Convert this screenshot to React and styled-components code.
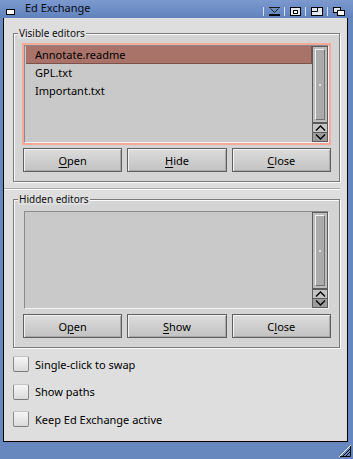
import React from 'react';
import styled, { createGlobalStyle } from 'styled-components';

const Global = createGlobalStyle`
  html, body { margin: 0; padding: 0; background: #6787bf; }
  body { font-family: "Noto Sans", "DejaVu Sans", sans-serif; }
  * { box-sizing: border-box; }
`;

const Window = styled.div`
  width: 353px;
  height: 459px;
  display: flex;
  flex-direction: column;
  background: #6787bf;
  overflow: hidden;
`;

const TitleBar = styled.div`
  height: 18px;
  flex: none;
  display: flex;
  align-items: flex-start;
  background: linear-gradient(#7b99cf, #6083bd);
  padding-left: 6px;
`;

const CloseGadget = styled.span`
  width: 9px;
  height: 6px;
  margin-top: 9px;
  border: 1px solid #000;
  background: #fff;
  flex: none;
`;

const Title = styled.span`
  margin-left: 10px;
  font-size: 11px;
  line-height: 15px;
  color: #0a0a14;
  white-space: nowrap;
`;

const Spacer = styled.span`
  flex: 1;
`;

const Gadgets = styled.div`
  display: flex;
  margin-top: 7px;
  margin-right: 4px;
`;

const Gadget = styled.span`
  display: flex;
  align-items: flex-end;
  height: 9px;
  border-left: 1px solid #d6e0f2;
  padding-left: 5px;
  padding-right: 4px;
`;

const Middle = styled.div`
  flex: 1;
  display: flex;
  padding: 0 5px 0 3px;
  min-height: 0;
`;

const Content = styled.div`
  flex: 1;
  display: flex;
  flex-direction: column;
  background: #dedede;
  border-left: 1px solid #000;
  border-right: 1px solid #000;
  border-bottom: 1px solid #000;
  padding: 10px 7px 0 9px;
`;

const Group = styled.fieldset`
  margin: 0;
  min-width: 0;
  padding: 4px 8px 9px 8px;
  border: 1px solid #7c7c7c;
  box-shadow: 1px 1px 0 #fafafa, inset 1px 1px 0 #fafafa;
  background: #d4d4d4;
  display: flex;
  flex-direction: column;
`;

const Legend = styled.legend`
  font-size: 10px;
  line-height: 11px;
  color: #111;
  padding: 0 1px;
  margin-left: -4px;
  background: #dedede;
`;

const ListBox = styled.div`
  height: 102px;
  border: 2px solid ${p => (p.$focused ? '#f6a998' : 'transparent')};
  display: flex;
`;

const ListInner = styled.div`
  flex: 1;
  display: flex;
  background: #c9c9c9;
  border: 1px solid;
  border-color: #8a8a8a #f2f2f2 #f2f2f2 #8a8a8a;
  padding-left: 1px;
`;

const Rows = styled.div`
  flex: 1;
  display: flex;
  flex-direction: column;
`;

const Row = styled.div`
  height: 18px;
  padding-left: 9px;
  font-size: 11px;
  color: #000;
  background: ${p => (p.$selected ? '#a9736a' : 'transparent')};
  border-bottom: 1px solid ${p => (p.$selected ? '#7d524b' : 'transparent')};
  border-right: 1px solid ${p => (p.$selected ? '#7d524b' : 'transparent')};
  line-height: 17px;
`;

const ScrollCol = styled.div`
  width: 16px;
  flex: none;
  display: flex;
  flex-direction: column;
`;

const Track = styled.div`
  flex: 1;
  display: flex;
  padding: 2px;
  background: #bdbdbd;
  border: 1px solid #5c5c5c;
`;

const Knob = styled.div`
  flex: 1;
  display: flex;
  align-items: center;
  justify-content: center;
  background: #ababab;
  border: 1px solid;
  border-color: #f0f0f0 #707070 #707070 #f0f0f0;
`;

const Dot = styled.span`
  width: 2px;
  height: 2px;
  border-radius: 50%;
  background: #f4f4f4;
`;

const Arrow = styled.div`
  display: flex;
  align-items: center;
  justify-content: center;
  background: ${p => (p.$down ? '#9c9c9c' : '#c4c4c4')};
  border: 1px solid #5c5c5c;
  border-top-width: ${p => (p.$down ? '0' : '1px')};
  height: ${p => (p.$down ? '9px' : '10px')};
`;

const ButtonRow = styled.div`
  display: grid;
  grid-template-columns: 1fr 1fr 1fr;
  column-gap: 5px;
  margin-top: 3px;
  margin-left: 1px;
`;

const Button = styled.div`
  height: 24px;
  display: flex;
  align-items: center;
  justify-content: center;
  font-size: 11px;
  color: #000;
  border: 1px solid #5f5f5f;
  background: linear-gradient(#dcdcdc, #c2c2c2);
  box-shadow: inset 1px 1px 0 #f2f2f2, inset -1px -1px 0 #a8a8a8;
`;

const Key = styled.span`
  text-decoration: underline;
  text-underline-offset: 2px;
`;

const Divider = styled.div`
  height: 2px;
  margin: 6px 0 4px -9px;
  border-top: 1px solid #a9a9a9;
  border-bottom: 1px solid #fbfbfb;
`;

const Checks = styled.div`
  display: flex;
  flex-direction: column;
  gap: 11.5px;
  margin-top: 8px;
`;

const CheckRow = styled.label`
  display: flex;
  align-items: center;
  height: 16px;
  font-size: 11px;
  color: #000;
  gap: 6px;
`;

const Box = styled.span`
  width: 16px;
  height: 16px;
  flex: none;
  border: 1px solid;
  border-color: #c4c4c4 #8a8a8a #7a7a7a #8a8a8a;
  border-radius: 2px;
  background: linear-gradient(#f6f6f6, #dadada);
`;

const BottomBar = styled.div`
  height: 17px;
  flex: none;
  display: flex;
  justify-content: flex-end;
  align-items: flex-end;
  padding: 0 2px 2px 0;
`;

const Up = () => (
  <svg width="11" height="6" viewBox="0 0 11 6">
    <path d="M1 5.5 L5.5 1 L10 5.5" fill="none" stroke="#000" strokeWidth="1.3" />
  </svg>
);
const Down = () => (
  <svg width="11" height="6" viewBox="0 0 11 6">
    <path d="M1 0.5 L5.5 5 L10 0.5" fill="none" stroke="#000" strokeWidth="1.3" />
  </svg>
);

const Scroller = () => (
  <ScrollCol>
    <Track>
      <Knob>
        <Dot />
      </Knob>
    </Track>
    <Arrow>
      <Up />
    </Arrow>
    <Arrow $down>
      <Down />
    </Arrow>
  </ScrollCol>
);

const ListView = ({ focused, items }) => (
  <ListBox $focused={focused}>
    <ListInner>
      <Rows>
        {items.map((it, i) => (
          <Row key={it} $selected={focused && i === 0}>
            {it}
          </Row>
        ))}
      </Rows>
      <Scroller />
    </ListInner>
  </ListBox>
);

const Label = ({ text, k }) => {
  const i = text.indexOf(k);
  return (
    <span>
      {text.slice(0, i)}
      <Key>{k}</Key>
      {text.slice(i + 1)}
    </span>
  );
};

export default function App() {
  return (
    <>
      <Global />
      <Window>
        <TitleBar>
          <CloseGadget />
          <Title>Ed Exchange</Title>
          <Spacer />
          <Gadgets>
            <Gadget>
              <svg width="11" height="9" viewBox="0 0 11 9">
                <path d="M0 0.5 H11" stroke="#1a1a1a" />
                <path d="M1.5 1.5 L5.5 5.5 L9.5 1.5" fill="none" stroke="#1a1a1a" />
                <rect x="0" y="7" width="11" height="2" fill="#000" />
              </svg>
            </Gadget>
            <Gadget>
              <svg width="11" height="9" viewBox="0 0 11 9">
                <rect x="0.5" y="0.5" width="10" height="8" fill="#e4eaf4" stroke="#000" />
                <rect x="3.5" y="3.5" width="4" height="3" fill="#fff" stroke="#000" />
              </svg>
            </Gadget>
            <Gadget>
              <svg width="12" height="9" viewBox="0 0 12 9">
                <rect x="0.5" y="0.5" width="11" height="8" fill="#e4eaf4" stroke="#000" />
                <path d="M0.5 4.5 H6.5 V0.5" fill="none" stroke="#000" />
              </svg>
            </Gadget>
            <Gadget>
              <svg width="12" height="9" viewBox="0 0 12 9">
                <rect x="0.5" y="0.5" width="7" height="5" fill="#e4eaf4" stroke="#000" />
                <rect x="4.5" y="3.5" width="7" height="5" fill="#fff" stroke="#000" />
              </svg>
            </Gadget>
          </Gadgets>
        </TitleBar>
        <Middle>
          <Content>
            <Group>
              <Legend>Visible editors</Legend>
              <ListView focused items={['Annotate.readme', 'GPL.txt', 'Important.txt']} />
              <ButtonRow>
                <Button><Label text="Open" k="O" /></Button>
                <Button><Label text="Hide" k="H" /></Button>
                <Button><Label text="Close" k="C" /></Button>
              </ButtonRow>
            </Group>
            <Divider />
            <Group>
              <Legend>Hidden editors</Legend>
              <ListView items={[]} />
              <ButtonRow>
                <Button><Label text="Open" k="p" /></Button>
                <Button><Label text="Show" k="S" /></Button>
                <Button><Label text="Close" k="l" /></Button>
              </ButtonRow>
            </Group>
            <Checks>
              <CheckRow><Box />Single-click to swap</CheckRow>
              <CheckRow><Box />Show paths</CheckRow>
              <CheckRow><Box />Keep Ed Exchange active</CheckRow>
            </Checks>
          </Content>
        </Middle>
        <BottomBar>
          <svg width="12" height="12" viewBox="0 0 12 12">
            <path d="M11.5 0.5 V11.5 H0.5 Z" fill="#6787bf" stroke="#fff" />
            <path d="M4 11 L11 4" stroke="#000" />
            <path d="M7 11 L11 7" stroke="#000" />
            <path d="M1 11.5 H11.5 V1" fill="none" stroke="#000" />
          </svg>
        </BottomBar>
      </Window>
    </>
  );
}
